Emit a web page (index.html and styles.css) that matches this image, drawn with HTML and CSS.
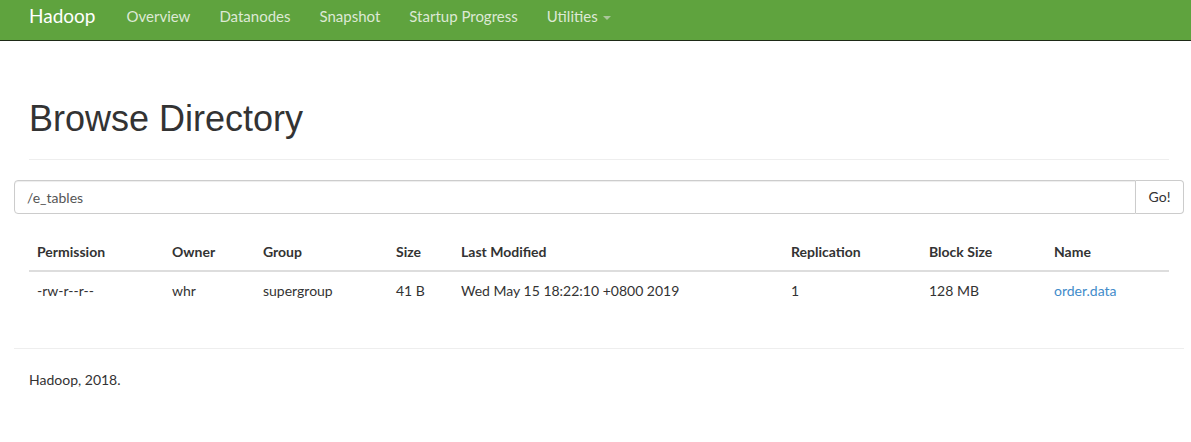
FILE: index.html
```html
<!DOCTYPE html>
<html>
<head>
<meta charset="utf-8">
<link rel="stylesheet" href="styles.css">
</head>
<body>
<nav class="navbar">
  <div class="nav-inner">
    <a class="brand">Hadoop</a>
    <ul class="nav">
      <li><a>Overview</a></li>
      <li><a>Datanodes</a></li>
      <li><a>Snapshot</a></li>
      <li><a>Startup Progress</a></li>
      <li><a>Utilities <span class="caret"></span></a></li>
    </ul>
  </div>
</nav>
<div class="container">
  <div class="page-header">
    <h1>Browse Directory</h1>
  </div>
  <div class="input-group">
    <div class="form-control">/e_tables</div>
    <button class="btn">Go!</button>
  </div>
  <div class="table-wrap">
    <table class="table">
      <thead>
        <tr>
          <th class="c-perm">Permission</th>
          <th class="c-owner">Owner</th>
          <th class="c-group">Group</th>
          <th class="c-size">Size</th>
          <th class="c-mod">Last Modified</th>
          <th class="c-rep">Replication</th>
          <th class="c-block">Block Size</th>
          <th class="c-name">Name</th>
        </tr>
      </thead>
      <tbody>
        <tr>
          <td>-rw-r--r--</td>
          <td>whr</td>
          <td>supergroup</td>
          <td>41 B</td>
          <td>Wed May 15 18:22:10 +0800 2019</td>
          <td>1</td>
          <td>128 MB</td>
          <td><a class="link">order.data</a></td>
        </tr>
      </tbody>
    </table>
  </div>
  <hr class="footer-rule">
  <div class="footer">Hadoop, 2018.</div>
</div>
</body>
</html>
```
FILE: styles.css
```css
* { box-sizing: border-box; }
html, body {
  margin: 0;
  padding: 0;
  background: #fff;
  color: #333;
  font-family: "Lato", "Liberation Sans", sans-serif;
  font-size: 14px;
  line-height: 1.42857;
}
.navbar {
  background: #5fa33e;
  height: 41px;
  border-bottom: 1px solid #1e2a17;
}
.nav-inner {
  display: flex;
  align-items: flex-start;
  height: 40px;
  padding-left: 29px;
  padding-top: 5px;
}
.brand {
  color: #fff;
  font-size: 19px;
  line-height: 22px;
  margin-right: 31px;
}
.nav {
  display: flex;
  list-style: none;
  margin: 0;
  padding: 0;
  padding-top: 1px;
}
.nav li a {
  color: #dde9d5;
  font-size: 15px;
  line-height: 20px;
  padding: 0 14.5px;
  display: block;
}
.nav li:first-child a { padding-left: 0; }
.caret {
  display: inline-block;
  width: 0;
  height: 0;
  margin-left: 2px;
  vertical-align: middle;
  border-top: 4px solid #aac69a;
  border-left: 4px solid transparent;
  border-right: 4px solid transparent;
}
.container {
  width: 1170px;
  margin-left: 14px;
}
.page-header {
  padding: 0 15px;
}
.page-header h1 {
  margin: 0;
  padding: 58px 0 20px;
  font-family: "Liberation Sans", Arial, sans-serif;
  font-weight: 400;
  font-size: 36px;
  line-height: 1.1;
  border-bottom: 1px solid #eee;
}
.input-group {
  display: flex;
  margin-top: 20px;
  height: 34px;
}
.form-control {
  flex: 1;
  border: 1px solid #ccc;
  border-radius: 4px 0 0 4px;
  padding: 7px 12px 5px;
  color: #555;
  box-shadow: inset 0 1px 1px rgba(0,0,0,.075);
}
.btn {
  font: inherit;
  color: #333;
  background: #fff;
  border: 1px solid #ccc;
  border-left: 0;
  border-radius: 0 4px 4px 0;
  padding: 6px 12px;
  width: 48px;
}
.table-wrap {
  padding: 0 15px;
  margin-top: 20px;
}
.table {
  width: 100%;
  border-collapse: collapse;
  table-layout: fixed;
}
.table th, .table td {
  text-align: left;
  padding: 8px;
  vertical-align: bottom;
}
.table th { border-bottom: 2px solid #ddd; font-weight: 700; }
.table td { padding-top: 9px; }
.c-perm { width: 135px; }
.c-owner { width: 91px; }
.c-group { width: 133px; }
.c-size { width: 65px; }
.c-mod { width: 330px; }
.c-rep { width: 138px; }
.c-block { width: 125px; }
.link { color: #428bca; }
.footer-rule {
  margin: 39px 0 0;
  border: 0;
  border-top: 1px solid #eee;
}
.footer {
  padding: 21px 15px;
}
```
